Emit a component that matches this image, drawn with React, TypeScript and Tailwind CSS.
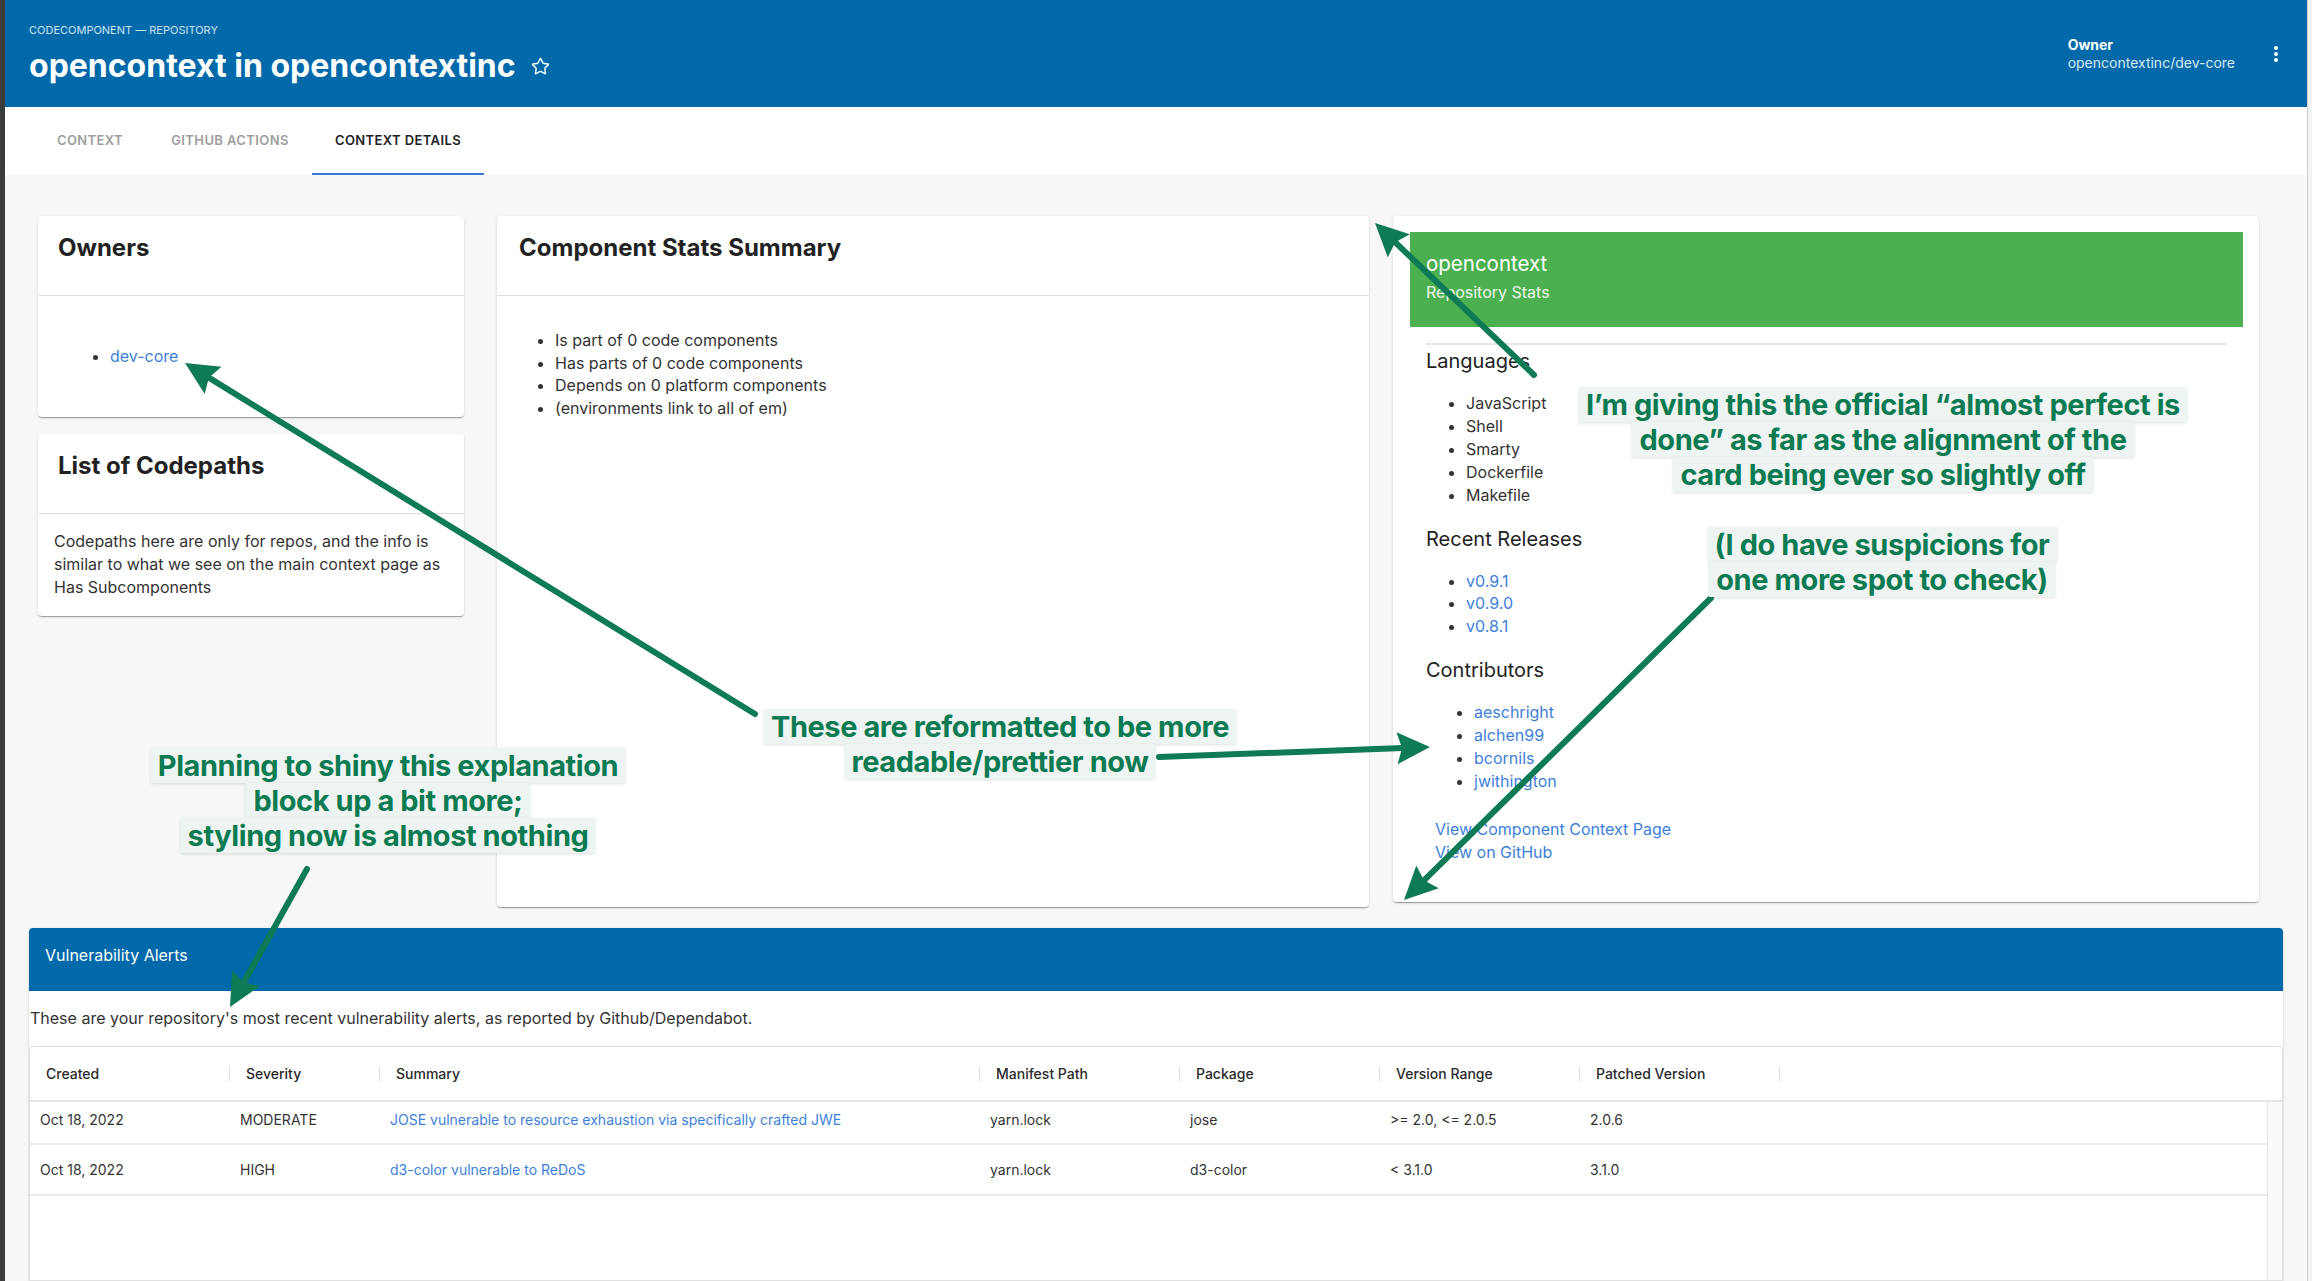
import { Star } from 'lucide-react'

const languages = ['JavaScript', 'Shell', 'Smarty', 'Dockerfile', 'Makefile']
const releases = ['v0.9.1', 'v0.9.0', 'v0.8.1']
const contributors = ['aeschright', 'alchen99', 'bcornils', 'jwithington']

const alerts = [
    { created: 'Oct 18, 2022', severity: 'MODERATE', summary: 'JOSE vulnerable to resource exhaustion via specifically crafted JWE', path: 'yarn.lock', pkg: 'jose', range: '>= 2.0, <= 2.0.5', patched: '2.0.6', h: 'h-[43px] pb-[7px]' },
    { created: 'Oct 18, 2022', severity: 'HIGH', summary: 'd3-color vulnerable to ReDoS', path: 'yarn.lock', pkg: 'd3-color', range: '< 3.1.0', patched: '3.1.0', h: 'h-[51px]' },
]

const cardShadow = 'shadow-[0_2px_1px_-1px_rgba(0,0,0,0.2),0_1px_1px_0_rgba(0,0,0,0.14),0_1px_3px_0_rgba(0,0,0,0.12)]'

function Arrow({ x1, y1, x2, y2 }: { x1: number; y1: number; x2: number; y2: number }) {
    const dx = x2 - x1
    const dy = y2 - y1
    const len = Math.hypot(dx, dy)
    const ux = dx / len
    const uy = dy / len
    const bx = x2 - ux * 33
    const by = y2 - uy * 33
    const nx = -uy * 16
    const ny = ux * 16
    return (
        <g>
            <line x1={x1} y1={y1} x2={bx + ux * 6} y2={by + uy * 6} stroke="#0f7a56" strokeWidth={6} strokeLinecap="round" />
            <polygon points={`${x2},${y2} ${bx + nx},${by + ny} ${bx + ux * 5},${by + uy * 5} ${bx - nx},${by - ny}`} fill="#0f7a56" />
        </g>
    )
}

function Note({ lines }: { lines: string[] }) {
    return (
        <div className="flex flex-col items-center">
            {lines.map((l) => (
                <span key={l} className="inline-block whitespace-nowrap bg-[#eef4f1] px-[7px] text-[29px] leading-[35px] font-bold text-[#0c7a52] tracking-[-0.015em] shadow-[0_1px_3px_rgba(0,0,0,0.12)]">
                    {l}
                </span>
            ))}
        </div>
    )
}

function CardHeader({ title, pad }: { title: string; pad: string }) {
    return (
        <div className={`h-[80px] border-b border-[#e0e0e0] pt-4 ${pad}`}>
            <h2 className="text-[24px] leading-[32px] font-bold text-[#222]">{title}</h2>
        </div>
    )
}

export default function App() {
    return (
        <div className="relative flex w-[2312px] h-[1281px] overflow-hidden bg-[#f7f7f7] font-['Inter',sans-serif] text-[#333]">
            <div className="w-[5px] shrink-0 bg-[#3b3b3b]" />

            <div className="flex w-[2302px] shrink-0 flex-col">
                {/* top bar */}
                <header className="flex h-[107px] shrink-0 items-center justify-between bg-[#0069aa] pl-6 pr-[28px] text-white">
                    <div className="flex flex-col">
                        <div className="text-[11px] leading-[16px] uppercase text-white/80">Codecomponent — Repository</div>
                        <div className="mt-2 flex items-center gap-[15px]">
                            <h1 className="text-[32px] leading-[40px] font-bold">opencontext in opencontextinc</h1>
                            <Star size={19} strokeWidth={1.8} className="mt-[2px]" />
                        </div>
                    </div>
                    <div className="flex items-center gap-[38px]">
                        <div className="flex flex-col text-[14px] leading-[18px]">
                            <span className="font-bold">Owner</span>
                            <span className="text-white/85">opencontextinc/dev-core</span>
                        </div>
                        <svg width="6" height="18" viewBox="0 0 6 18" fill="white">
                            <circle cx="3" cy="3" r="2" />
                            <circle cx="3" cy="9" r="2" />
                            <circle cx="3" cy="15" r="2" />
                        </svg>
                    </div>
                </header>

                {/* tabs */}
                <nav className="flex h-[68px] shrink-0 bg-white pl-[27px] text-[13px] font-semibold uppercase tracking-[0.03em]">
                    <div className="flex w-[116px] items-center justify-center text-[#9e9e9e]">Context</div>
                    <div className="flex w-[164px] items-center justify-center text-[#9e9e9e]">Github Actions</div>
                    <div className="relative flex w-[172px] items-center justify-center text-[#222]">
                        Context Details
                        <div className="absolute bottom-0 left-0 h-[2px] w-full bg-[#3478d4]" />
                    </div>
                </nav>

                {/* content */}
                <main className="flex flex-1 flex-col">
                    <div className="flex items-start pl-[33px] pt-[41px]">
                        <div className="flex w-[426px] flex-col gap-[17px]">
                            <section className={`h-[201px] rounded-[4px] bg-white ${cardShadow}`}>
                                <CardHeader title="Owners" pad="pl-[20px]" />
                                <ul className="list-disc py-[48px] pl-[72px] text-[16px] leading-[24px]">
                                    <li className="text-[#3d7fdb] marker:text-[#333]">dev-core</li>
                                </ul>
                            </section>
                            <section className={`h-[182px] rounded-[4px] bg-white ${cardShadow}`}>
                                <CardHeader title="List of Codepaths" pad="pl-[20px]" />
                                <p className="px-4 pt-4 text-[16px] leading-[23px] whitespace-nowrap">
                                    Codepaths here are only for repos, and the info is
                                    <br />
                                    similar to what we see on the main context page as
                                    <br />
                                    Has Subcomponents
                                </p>
                            </section>
                        </div>

                        <section className={`ml-[33px] h-[691px] w-[872px] rounded-[4px] bg-white ${cardShadow}`}>
                            <CardHeader title="Component Stats Summary" pad="pl-[22px]" />
                            <ul className="list-disc pl-[58px] pt-[33px] text-[16px] leading-[22.7px]">
                                <li>Is part of 0 code components</li>
                                <li>Has parts of 0 code components</li>
                                <li>Depends on 0 platform components</li>
                                <li>(environments link to all of em)</li>
                            </ul>
                        </section>

                        <section className={`ml-[24px] h-[686px] w-[866px] rounded-[4px] bg-white pt-4 ${cardShadow}`}>
                            <div className="ml-[17px] mr-4 h-[95px] bg-[#4caf50] pl-4 pt-[18px] text-white">
                                <div className="text-[20.5px] leading-[28px]">opencontext</div>
                                <div className="mt-1 text-[16px] leading-[20px] text-white/90">Repository Stats</div>
                            </div>
                            <div className="mx-[32px] ml-[33px] mt-4 border-t-2 border-[#e8e8e8]" />
                            <div className="pl-[33px] pt-[3px] text-[16px] leading-[22.9px]">
                                <h3 className="mb-[18px] text-[20px] leading-[26px] text-[#222]">Languages</h3>
                                <ul className="mb-[19px] list-disc pl-[40px]">
                                    {languages.map((l) => (
                                        <li key={l}>{l}</li>
                                    ))}
                                </ul>
                                <h3 className="mb-[18px] text-[20px] leading-[26px] text-[#222]">Recent Releases</h3>
                                <ul className="mb-[19px] list-disc pl-[40px] text-[#3d7fdb]">
                                    {releases.map((r) => (
                                        <li key={r} className="marker:text-[#333]">{r}</li>
                                    ))}
                                </ul>
                                <h3 className="mb-[18px] text-[20px] leading-[26px] text-[#222]">Contributors</h3>
                                <ul className="mb-[25px] list-disc pl-[48px] text-[#3d7fdb]">
                                    {contributors.map((c) => (
                                        <li key={c} className="marker:text-[#333]">{c}</li>
                                    ))}
                                </ul>
                                <div className="flex flex-col pl-[9px] leading-[23px] text-[#3d7fdb]">
                                    <span>View Component Context Page</span>
                                    <span>View on GitHub</span>
                                </div>
                            </div>
                        </section>
                    </div>

                    {/* vulnerability alerts */}
                    <section className={`mx-6 mt-[21px] flex flex-1 flex-col rounded-t-[4px] bg-white ${cardShadow}`}>
                        <div className="flex h-[63px] items-center rounded-t-[4px] bg-[#0069aa] pb-[9px] pl-4 text-[16px] text-white">
                            Vulnerability Alerts
                        </div>
                        <p className="mt-4 pl-px text-[16px] leading-[22px]">
                            These are your repository's most recent vulnerability alerts, as reported by Github/Dependabot.
                        </p>
                        <div className="mt-[17px] flex flex-1 flex-col rounded-t-[4px] border border-[#e0e0e0] text-[14px] text-[#333]">
                            <div className="flex h-[55px] border-b-2 border-[#e6e6e6]">
                                {[
                                    ['Created', 'w-[200px]'],
                                    ['Severity', 'w-[150px]'],
                                    ['Summary', 'w-[600px]'],
                                    ['Manifest Path', 'w-[200px]'],
                                    ['Package', 'w-[200px]'],
                                    ['Version Range', 'w-[200px]'],
                                    ['Patched Version', 'w-[200px]'],
                                ].map(([t, w]) => (
                                    <div key={t} className={`flex items-center justify-between pl-4 ${w}`}>
                                        <span className="font-medium text-[#2a2a2a]">{t}</span>
                                        <span className="h-[15px] w-px bg-[#e0e0e0]" />
                                    </div>
                                ))}
                            </div>
                            <div className="flex flex-1">
                                <div className="flex flex-1 flex-col">
                                    {alerts.map((a) => (
                                        <div key={a.summary} className={`flex items-center border-b-2 border-[#ececec] ${a.h}`}>
                                            <div className="w-[200px] pl-[10px]">{a.created}</div>
                                            <div className="w-[150px] pl-[10px]">{a.severity}</div>
                                            <div className="w-[600px] pl-[10px] text-[#3d7fdb]">{a.summary}</div>
                                            <div className="w-[200px] pl-[10px]">{a.path}</div>
                                            <div className="w-[200px] pl-[10px]">{a.pkg}</div>
                                            <div className="w-[200px] pl-[10px]">{a.range}</div>
                                            <div className="w-[200px] pl-[10px]">{a.patched}</div>
                                        </div>
                                    ))}
                                </div>
                                <div className="w-[15px] border-l border-[#e4e4e4] bg-[#fafafa]" />
                            </div>
                        </div>
                    </section>
                </main>
            </div>

            <div className="w-[5px] shrink-0 border-l border-[#cfcfcf] bg-[#f3f3f3]" />

            {/* annotations */}
            <svg className="pointer-events-none absolute left-0 top-0" width="2312" height="1281">
                <Arrow x1={755} y1={714} x2={185} y2={363} />
                <Arrow x1={1159} y1={757} x2={1430} y2={747} />
                <Arrow x1={1534} y1={375} x2={1375} y2={223} />
                <Arrow x1={1711} y1={598} x2={1404} y2={900} />
                <Arrow x1={307} y1={869} x2={230} y2={1007} />
            </svg>
            <div className="absolute left-[1533px] top-[387px] w-[700px]">
                <Note lines={['I’m giving this the official “almost perfect is', 'done” as far as the alignment of the', 'card being ever so slightly off']} />
            </div>
            <div className="absolute left-[1532px] top-[527px] w-[700px]">
                <Note lines={['(I do have suspicions for', 'one more spot to check)']} />
            </div>
            <div className="absolute left-[650px] top-[709px] w-[700px]">
                <Note lines={['These are reformatted to be more', 'readable/prettier now']} />
            </div>
            <div className="absolute left-[88px] top-[748px] w-[600px]">
                <Note lines={['Planning to shiny this explanation', 'block up a bit more;', 'styling now is almost nothing']} />
            </div>
        </div>
    )
}
